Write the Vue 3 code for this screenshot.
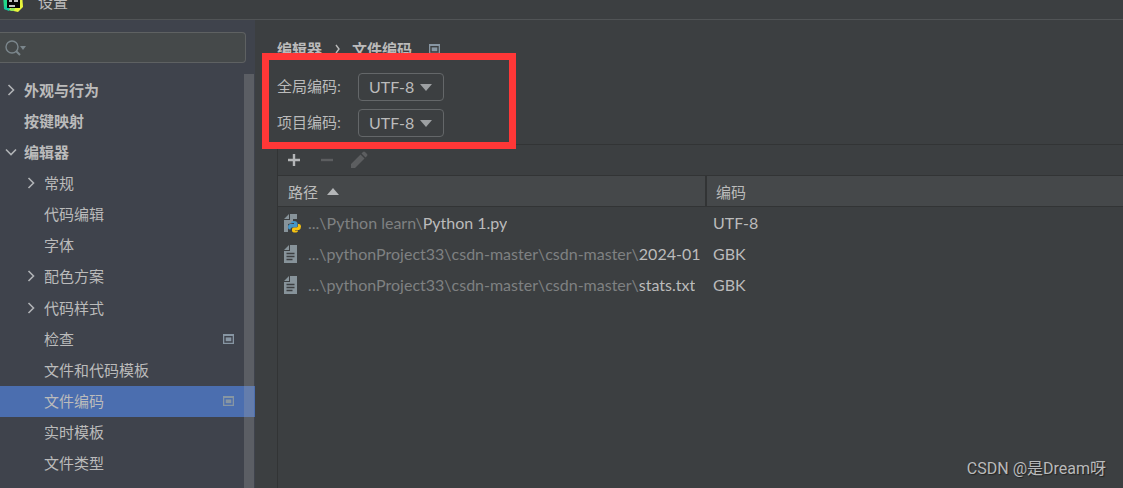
<script setup>
import { ref } from 'vue'

const query = ref('')
const globalEncoding = ref('UTF-8')
const projectEncoding = ref('UTF-8')
const encodings = ['UTF-8', 'GBK', 'ISO-8859-1']

const tree = [
  { label: '外观与行为', level: 0, arrow: 'right' },
  { label: '按键映射', level: 0 },
  { label: '编辑器', level: 0, arrow: 'down' },
  { label: '常规', level: 1, arrow: 'right' },
  { label: '代码编辑', level: 1 },
  { label: '字体', level: 1 },
  { label: '配色方案', level: 1, arrow: 'right' },
  { label: '代码样式', level: 1, arrow: 'right' },
  { label: '检查', level: 1, badge: true },
  { label: '文件和代码模板', level: 1 },
  { label: '文件编码', level: 1, badge: true, selected: true },
  { label: '实时模板', level: 1 },
  { label: '文件类型', level: 1 },
]

const files = [
  { dir: '...\\Python learn\\', name: 'Python 1.py', encoding: 'UTF-8', python: true },
  { dir: '...\\pythonProject33\\csdn-master\\csdn-master\\', name: '2024-01', encoding: 'GBK' },
  { dir: '...\\pythonProject33\\csdn-master\\csdn-master\\', name: 'stats.txt', encoding: 'GBK' },
]
</script>

<template>
  <div class="window">
    <header class="titlebar">
      <svg class="logo" width="22" height="22" viewBox="0 0 22 22" aria-hidden="true">
        <path d="M1 4L10 0l2 8-2 13-8-2z" fill="#21d789" />
        <path d="M10 0l10 3 1 14-5 5-9-2z" fill="#e9f53c" />
        <path d="M2 16l6 2-1 3-5-2z" fill="#13c8a0" />
        <path d="M9 18l4 0-1 3-4-1z" fill="#8de856" />
        <rect x="5" y="3" width="13" height="15" fill="#050505" />
        <path d="M7 11h3M12 11h4M7 16h6" stroke="#fff" stroke-width="1.3" />
      </svg>
      <span>设置</span>
    </header>

    <div class="body">
      <aside class="sidebar">
        <label class="search">
          <svg width="22" height="18" viewBox="0 0 22 18" aria-hidden="true">
            <circle cx="7" cy="8" r="6" fill="none" stroke="#7b868c" stroke-width="1.4" />
            <path d="M11 12l4 4" stroke="#7b868c" stroke-width="2" />
            <path d="M15 7h6l-3 4z" fill="#7b868c" />
          </svg>
          <input v-model="query" type="text" aria-label="搜索" />
        </label>

        <nav class="tree">
          <a
            v-for="item in tree"
            :key="item.label"
            href="#"
            class="node"
            :class="['level-' + item.level, { selected: item.selected }]"
          >
            <svg class="arrow" width="12" height="12" viewBox="0 0 12 12" aria-hidden="true">
              <path v-if="item.arrow === 'right'" d="M3.5 1l5 5-5 5" />
              <path v-if="item.arrow === 'down'" d="M1 3.5l5 5 5-5" />
            </svg>
            <span>{{ item.label }}</span>
            <svg v-if="item.badge" class="badge" width="11" height="10" viewBox="0 0 11 10" aria-hidden="true">
              <path d="M0 0h11v10H0zM1.300 2v6.700h8.400V2z" fill="#8796a3" fill-rule="evenodd" />
              <rect x="2.700" y="3.400" width="5.600" height="3.800" fill="#8796a3" />
            </svg>
          </a>
          <div class="scrollbar"></div>
        </nav>
      </aside>

      <main class="content">
        <h1 class="crumbs">
          <span>编辑器</span>
          <svg width="6" height="10" viewBox="0 0 6 10" aria-hidden="true">
            <path d="M2 1l3 4-3 4" fill="none" stroke="#bbb" stroke-width="1.4" />
          </svg>
          <span>文件编码</span>
          <svg class="crumb-badge" width="11" height="10" viewBox="0 0 11 10" aria-hidden="true">
            <path d="M0 0h11v10H0zM1.300 2v6.700h8.400V2z" fill="#8796a3" fill-rule="evenodd" />
            <rect x="2.700" y="3.400" width="5.600" height="3.800" fill="#8796a3" />
          </svg>
        </h1>

        <form class="options">
          <label for="global-encoding">全局编码:</label>
          <div class="combo">
            <select id="global-encoding" v-model="globalEncoding">
              <option v-for="e in encodings" :key="e">{{ e }}</option>
            </select>
            <svg width="12" height="7" viewBox="0 0 12 7" aria-hidden="true"><path d="M0 0h12L6 7z" fill="#9da0a2" /></svg>
          </div>
          <label for="project-encoding">项目编码:</label>
          <div class="combo">
            <select id="project-encoding" v-model="projectEncoding">
              <option v-for="e in encodings" :key="e">{{ e }}</option>
            </select>
            <svg width="12" height="7" viewBox="0 0 12 7" aria-hidden="true"><path d="M0 0h12L6 7z" fill="#9da0a2" /></svg>
          </div>
          <div class="highlight"></div>
        </form>

        <section class="panel">
          <div class="toolbar">
            <button type="button" aria-label="添加">
              <svg width="18" height="18" viewBox="0 0 18 18"><path d="M9 3v12M3 9h12" stroke="#b4b6b8" stroke-width="2.4" /></svg>
            </button>
            <button type="button" aria-label="移除" disabled>
              <svg width="18" height="18" viewBox="0 0 18 18"><path d="M3 9h12" stroke="#5c5e60" stroke-width="2.4" /></svg>
            </button>
            <button type="button" aria-label="编辑" disabled>
              <svg width="18" height="18" viewBox="0 0 18 18">
                <path d="M0 13L9.500 3.500l4 4L4 17H0zM10.500 2.500L12 1q1-1 2 0l2 2q1 1 0 2l-1.500 1.500z" fill="#5c5e60" />
              </svg>
            </button>
          </div>

          <table>
            <colgroup><col class="path-col" /><col /></colgroup>
            <thead>
              <tr>
                <th scope="col">
                  路径
                  <svg class="sort" width="12" height="7" viewBox="0 0 12 7" aria-hidden="true"><path d="M0 7h12L6 0z" fill="#b4b6b8" /></svg>
                </th>
                <th scope="col">编码</th>
              </tr>
            </thead>
            <tbody>
              <tr v-for="file in files" :key="file.name">
                <td>
                  <div class="file">
                    <svg width="18" height="20" viewBox="0 0 18 20" aria-hidden="true">
                      <path d="M0 7h6V1h7v18H0zM0 6l5-5v5z" fill="#87939a" />
                      <template v-if="file.python">
                        <path d="M9 6h6v5h3v9H4v-9l5-1z" fill="#3c3f41" />
                        <path d="M7 10q0-2 3-2t3.500 2v3q0 1.500-2 1.500H8q-1.500 0-1.500 2H6q-2 0-2-2.500T6 11h4v-1z" fill="#4596c8" />
                        <path d="M14 11h1q2 0 2 2.500T15 17H11v.5h3q0 2-3 2t-3-2V16q0-1.500 2-1.500h2.500q1.500 0 1.500-2z" fill="#f5c211" />
                      </template>
                      <path v-else d="M2.500 9.500h8M2.500 12.500h8M2.500 15.500h6" stroke="#3c3f41" stroke-width="1.300" />
                    </svg>
                    <span class="path"><span class="dir">{{ file.dir }}</span>{{ file.name }}</span>
                  </div>
                </td>
                <td>{{ file.encoding }}</td>
              </tr>
            </tbody>
          </table>
        </section>
      </main>
    </div>
    <div class="watermark">CSDN @是Dream呀</div>
  </div>
</template>

<style>
body {
  margin: 0;
  background: #3c3f41;
}
</style>

<style scoped>
.window {
  position: relative;
  display: flex;
  flex-direction: column;
  min-height: 100vh;
  overflow: hidden;
  background: #3c3f41;
  color: #bbbbbb;
  font: 15px/20px "Open Sans", "Noto Sans CJK SC", sans-serif;
}
.titlebar {
  display: flex;
  align-items: flex-end;
  gap: 14px;
  box-sizing: border-box;
  height: 20px;
  padding: 0 2px 7px;
  border-bottom: 1px solid #515456;
}
.titlebar svg,
.titlebar span {
  flex: none;
}
.body {
  display: flex;
  flex: 1;
}
.sidebar {
  display: flex;
  flex-direction: column;
  flex: none;
  width: 255px;
  background: #3f434c;
}
.search {
  display: flex;
  align-items: center;
  box-sizing: border-box;
  height: 31px;
  margin: 12px 9px 11px 0;
  padding-left: 5px;
  border: 1px solid #5e6162;
  border-left-width: 0;
  border-radius: 0 4px 4px 0;
  background: #45494a;
}
.search svg {
  flex: none;
}
.search input {
  flex: 1;
  min-width: 0;
  border: 0;
  outline: 0;
  background: transparent;
  color: inherit;
  font: inherit;
}
.tree {
  position: relative;
  display: grid;
  grid-auto-rows: 1fr;
  flex: 1;
  padding-bottom: 9px;
}
.node {
  display: flex;
  align-items: center;
  gap: 7px;
  padding: 0 21px 0 5px;
  color: inherit;
  text-decoration: none;
}
.level-0 {
  font-weight: 700;
}
.level-1 {
  padding-left: 25px;
}
.selected {
  background: #4b6eaf;
}
.arrow {
  flex: none;
  fill: none;
  stroke: #b0b3b6;
  stroke-width: 1.6;
}
.badge {
  margin-left: auto;
}
.scrollbar {
  position: absolute;
  top: 0;
  right: 1px;
  bottom: 0;
  width: 10px;
  background: rgba(166, 166, 166, 0.28);
}
.content {
  display: flex;
  flex-direction: column;
  flex: 1;
  min-width: 0;
  padding: 19px 0 0 22px;
}
.crumbs {
  display: flex;
  align-items: center;
  gap: 12px;
  margin: 0;
  font: inherit;
  font-weight: 700;
}
.crumb-badge {
  margin-left: 5px;
}
.options {
  position: relative;
  display: grid;
  grid-template-columns: 81px max-content;
  align-items: center;
  row-gap: 8px;
  padding: 14px 0 7px;
}
.options label {
  padding-bottom: 2px;
}
.combo {
  position: relative;
  display: flex;
  align-items: center;
}
.combo select {
  appearance: none;
  box-sizing: border-box;
  width: 86px;
  height: 28px;
  padding: 0 24px 0 10px;
  border: 1px solid #646769;
  border-radius: 4px;
  background: #3c3f41;
  color: inherit;
  font: 16px/20px Lato, "Noto Sans CJK SC", sans-serif;
}
.combo svg {
  position: absolute;
  right: 12px;
  pointer-events: none;
}
.highlight {
  position: absolute;
  top: -6px;
  left: -15px;
  box-sizing: border-box;
  width: 254px;
  height: 96px;
  border: 7px solid #ff3737;
  pointer-events: none;
}
.panel {
  flex: 1;
  border: solid #323435;
  border-width: 1px 0 0 1px;
}
.toolbar {
  display: flex;
  align-items: center;
  gap: 15px;
  height: 30px;
  padding-left: 7px;
}
.toolbar button {
  display: flex;
  padding: 0;
  border: 0;
  background: none;
}
table {
  width: 100%;
  table-layout: fixed;
  border-collapse: separate;
  border-spacing: 0;
}
.path-col {
  width: 429px;
}
th {
  box-sizing: border-box;
  height: 32px;
  padding: 1px 9px 0;
  border: solid #323435;
  border-width: 1px 0;
  background: #45484a;
  font-weight: 400;
  text-align: left;
}
th:first-child {
  padding-left: 10px;
  border-right-width: 2px;
}
.sort {
  margin: 0 0 3px 5px;
}
td {
  height: 31px;
  padding: 0 6px;
  font: 16px/20px Lato, "Noto Sans CJK SC", sans-serif;
}
td:first-child {
  padding-right: 2px;
}
.file {
  display: flex;
  align-items: center;
  gap: 6px;
}
.file svg {
  flex: none;
}
.path {
  overflow: hidden;
  white-space: nowrap;
}
.dir {
  color: #7f8182;
}
.watermark {
  position: absolute;
  right: 17px;
  bottom: 8px;
  color: #b9babb;
  font: 16px/22px Roboto, "Noto Sans CJK SC", sans-serif;
  text-shadow: 1px 1px 1px #222;
}
</style>
